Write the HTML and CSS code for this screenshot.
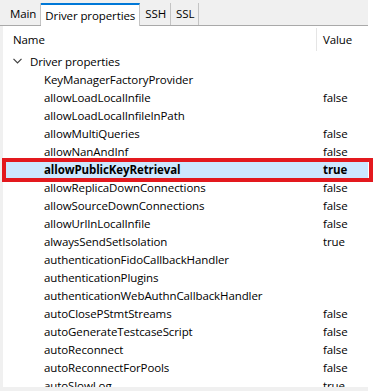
FILE: index.html
```html
<!DOCTYPE html>
<html lang="en">
<head>
    <meta charset="UTF-8">
    <title>Driver properties</title>
    <link rel="stylesheet" href="styles.css">
</head>
<body>
    <div class="panel">
        <!-- Tabs -->
        <div class="tabs">
            <div class="tab tab-main">Main</div>
            <div class="tab tab-active">Driver properties</div>
            <div class="tab">SSH</div>
            <div class="tab">SSL</div>
        </div>

        <!-- Properties tree -->
        <div class="tree">
            <div class="head">
                <div class="col-name">Name</div>
                <div class="col-value">Value</div>
            </div>
            <div class="row group">
                <div class="col-name">
                    <svg class="chevron" width="9" height="6" viewBox="0 0 9 6"><polyline points="0.5,0.8 4.5,4.8 8.5,0.8" fill="none" stroke="#404040" stroke-width="1.2"/></svg>
                    Driver properties
                </div>
                <div class="col-value"></div>
            </div>
            <div id="props"></div>
        </div>

        <div class="mark"></div>
    </div>

    <script>
        const props = [
            ['KeyManagerFactoryProvider', ''],
            ['allowLoadLocalInfile', 'false'],
            ['allowLoadLocalInfileInPath', ''],
            ['allowMultiQueries', 'false'],
            ['allowNanAndInf', 'false'],
            ['allowPublicKeyRetrieval', 'true', true],
            ['allowReplicaDownConnections', 'false'],
            ['allowSourceDownConnections', 'false'],
            ['allowUrlInLocalInfile', 'false'],
            ['alwaysSendSetIsolation', 'true'],
            ['authenticationFidoCallbackHandler', ''],
            ['authenticationPlugins', ''],
            ['authenticationWebAuthnCallbackHandler', ''],
            ['autoClosePStmtStreams', 'false'],
            ['autoGenerateTestcaseScript', 'false'],
            ['autoReconnect', 'false'],
            ['autoReconnectForPools', 'false'],
            ['autoSlowLog', 'true']
        ];

        const list = document.getElementById('props');
        props.forEach(p => {
            const cls = p[2] ? 'row prop selected' : 'row prop';
            list.innerHTML += `
                <div class="${cls}">
                    <div class="col-name">${p[0]}</div>
                    <div class="col-value">${p[1]}</div>
                </div>
            `;
        });
    </script>
</body>
</html>
```

FILE: styles.css
```css
/* Global */
body {
    margin: 0;
    background-color: #fff;
    font-family: 'Open Sans', 'Noto Sans', sans-serif;
    font-size: 11.5px;
    letter-spacing: -0.1px;
    color: #000;
}

.panel {
    position: relative;
    width: 368px;
    height: 391px;
    background-color: #f0f0f0;
}

/* Tabs */
.tabs {
    display: flex;
    height: 26px;
    padding-left: 3px;
    border-bottom: 1px solid #a9a9a9;
    box-sizing: border-box;
}

.tab {
    margin-top: 3px;
    padding: 0 4px 0 5px;
    line-height: 21px;
    border-right: 1px solid #c4c4c4;
    color: #000;
}

.tab-main {
    padding-left: 7px;
}

.tab-active {
    background-color: #fff;
    border-top: 2px solid #0078d7;
    line-height: 21px;
    margin-top: 3px;
    height: 21px;
    padding-left: 4px;
}

/* Tree */
.tree {
    margin-left: 3px;
    height: 361px;
    background-color: #fff;
    overflow: hidden;
}

.row, .head {
    display: flex;
    height: 18px;
    line-height: 18px;
    white-space: nowrap;
}

.head {
    height: 26px;
    line-height: 26px;
    padding-top: 1px;
}

.col-name {
    width: 313px;
    padding-left: 10px;
    box-sizing: border-box;
}

.col-value {
    flex: 1;
    padding-left: 7px;
}

.head .col-value {
    border-left: 1px solid #e5e5e5;
    height: 23px;
    margin-top: 1px;
    line-height: 24px;
    padding-left: 6px;
}

.group .col-name {
    padding-left: 10px;
}

.chevron {
    margin-right: 5px;
    vertical-align: 2px;
}

.prop .col-name {
    padding-left: 41px;
}

.selected {
    background-color: #cce8ff;
    font-weight: bold;
}

/* Red annotation box over the selected row */
.mark {
    position: absolute;
    left: 2px;
    top: 158px;
    width: 363px;
    height: 16px;
    border: 4px solid #e3191e;
}
```
